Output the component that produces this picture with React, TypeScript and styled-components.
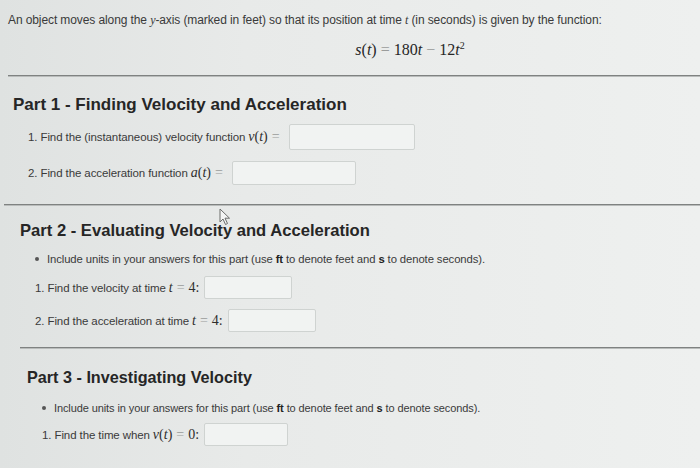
import styled, { createGlobalStyle } from 'styled-components';

const GlobalStyle = createGlobalStyle`
  html, body {
    margin: 0;
    overflow: hidden;
  }
  body {
    background: linear-gradient(90deg, #dfe2e1 0%, #e8eae9 35%, #eef0ef 100%);
    font-family: 'Liberation Sans', Arial, sans-serif;
    color: #3a3a3a;
  }
`;

const Page = styled.div`
  position: relative;
  width: 700px;
  height: 468px;
  padding-top: 12px;
  box-sizing: border-box;
`;

const Intro = styled.p`
  margin: 0 0 0 8px;
  font-size: 12px;
  line-height: 16px;
  letter-spacing: -0.1px;
`;

const MathDisplay = styled.div`
  margin: 9px 0 0 120px;
  text-align: center;
  font-family: 'Liberation Serif', 'Times New Roman', serif;
  font-size: 16px;
  line-height: 18px;
  color: #262626;
`;

const V = styled.i`
  font-family: 'Liberation Serif', 'Times New Roman', serif;
  font-style: italic;
`;

const Eq = styled.span`
  color: #9a9c9b;
  margin: 0 4px;
`;

const Sup = styled.sup`
  font-size: 10px;
`;

const Rule = styled.hr<{ $from: number; $gap: number }>`
  margin: ${(p) => p.$gap}px 0 0 ${(p) => p.$from}px;
  border: none;
  border-top: 1px solid #7f8281;
  box-shadow: 0 1px 0 #b9bcbb;
`;

const Section = styled.section<{ $indent: number; $gap: number }>`
  padding-left: ${(p) => p.$indent}px;
  margin-top: ${(p) => p.$gap}px;
`;

const Heading = styled.h2<{ $size: number }>`
  margin: 0;
  font-size: ${(p) => p.$size}px;
  line-height: 20px;
  font-weight: bold;
  color: #262626;
`;

const Note = styled.div<{ $gap: number; $size: number }>`
  display: flex;
  align-items: center;
  margin: ${(p) => p.$gap}px 0 0 15px;
  font-size: ${(p) => p.$size}px;
  line-height: 16px;
  letter-spacing: -0.1px;
  color: #3a3a3a;

  &::before {
    content: '';
    width: 4px;
    height: 4px;
    border-radius: 50%;
    background: #555;
    margin-right: 8px;
  }

  b {
    color: #222;
  }
`;

const Item = styled.div<{ $gap: number }>`
  display: flex;
  align-items: center;
  margin: ${(p) => p.$gap}px 0 0 15px;
  font-size: 11.5px;
  letter-spacing: -0.1px;
  color: #3a3a3a;
  gap: 3px;
`;

const MathInline = styled.span`
  font-family: 'Liberation Serif', 'Times New Roman', serif;
  font-size: 14px;
  letter-spacing: 0;
  color: #2e2e2e;
`;

const AnswerBox = styled.div<{ $w: number; $h: number }>`
  width: ${(p) => p.$w}px;
  height: ${(p) => p.$h}px;
  box-sizing: border-box;
  border: 1px solid #cfd3d1;
  border-radius: 2px;
  background: #f1f3f2;
  margin-left: 2px;
`;

const Pointer = styled.svg`
  position: absolute;
  left: 219px;
  top: 208px;
`;

const App = () => (
  <>
    <GlobalStyle />
    <Page>
      <Intro>
        An object moves along the <V>y</V>-axis (marked in feet) so that its position at time <V>t</V> (in
        seconds) is given by the function:
      </Intro>
      <MathDisplay>
        <V>s</V>(<V>t</V>)<Eq>=</Eq>180<V>t</V>
        <Eq>−</Eq>12<V>t</V>
        <Sup>2</Sup>
      </MathDisplay>
      <Rule $from={8} $gap={16} />

      <Section $indent={13} $gap={19}>
        <Heading $size={17}>Part 1 - Finding Velocity and Acceleration</Heading>
        <Item $gap={9}>
          1. Find the (instantaneous) velocity function{' '}
          <MathInline>
            <V>v</V>(<V>t</V>)<Eq>=</Eq>
          </MathInline>
          <AnswerBox $w={126} $h={26} />
        </Item>
        <Item $gap={11}>
          2. Find the acceleration function{' '}
          <MathInline>
            <V>a</V>(<V>t</V>)<Eq>=</Eq>
          </MathInline>
          <AnswerBox $w={124} $h={24} />
        </Item>
      </Section>
      <Rule $from={4} $gap={19} />

      <Section $indent={20} $gap={16}>
        <Heading $size={16.6}>Part 2 - Evaluating Velocity and Acceleration</Heading>
        <Note $gap={10} $size={11.3}>
          Include units in your answers for this part (use&nbsp;<b>ft</b>&nbsp;to denote feet and&nbsp;<b>s</b>
          &nbsp;to denote seconds).
        </Note>
        <Item $gap={9}>
          1. Find the velocity at time{' '}
          <MathInline>
            <V>t</V>
            <Eq>=</Eq>4:
          </MathInline>
          <AnswerBox $w={88} $h={23} />
        </Item>
        <Item $gap={10}>
          2. Find the acceleration at time{' '}
          <MathInline>
            <V>t</V>
            <Eq>=</Eq>4:
          </MathInline>
          <AnswerBox $w={88} $h={23} />
        </Item>
      </Section>
      <Rule $from={20} $gap={15} />

      <Section $indent={27} $gap={19}>
        <Heading $size={16.2}>Part 3 - Investigating Velocity</Heading>
        <Note $gap={13} $size={11}>
          Include units in your answers for this part (use&nbsp;<b>ft</b>&nbsp;to denote feet and&nbsp;<b>s</b>
          &nbsp;to denote seconds).
        </Note>
        <Item $gap={7}>
          1. Find the time when{' '}
          <MathInline>
            <V>v</V>(<V>t</V>)<Eq>=</Eq>0:
          </MathInline>
          <AnswerBox $w={84} $h={23} />
        </Item>
      </Section>

      <Pointer width="12" height="18" viewBox="0 0 12 18">
        <path
          d="M1 1 L1 14 L4 11 L6.5 16.5 L8.5 15.5 L6 10.2 L10.5 10.2 Z"
          fill="#f4f5f5"
          stroke="#6a6c6b"
          strokeWidth="1"
          strokeLinejoin="round"
        />
      </Pointer>
    </Page>
  </>
);

export default App;
